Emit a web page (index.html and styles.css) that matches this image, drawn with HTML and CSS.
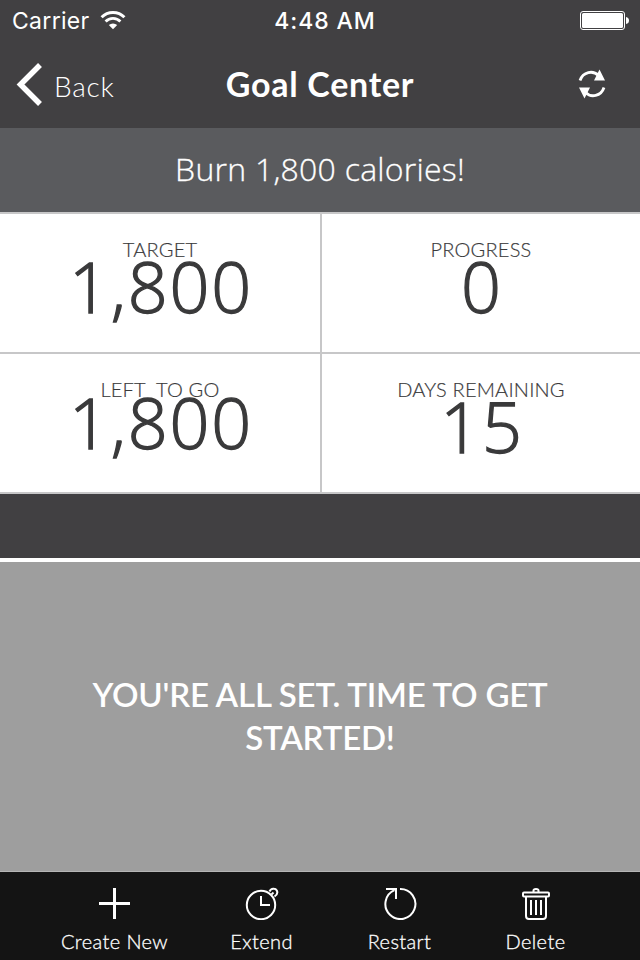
FILE: index.html
```
<!DOCTYPE html>
<html lang="en">

<head>
  <meta charset="utf-8">
  <title>Goal Center</title>
  <link rel="stylesheet" href="styles.css">
</head>

<body>
  <div class="app">
    <div class="status-bar">
      <div class="carrier">
        <span class="carrier-name">Carrier</span>
        <svg class="wifi" width="26" height="20" viewBox="0 0 26 20">
          <path d="M1.6 6.3A16 16 0 0 1 24.4 6.3" fill="none" stroke="#fff" stroke-width="3" />
          <path d="M5.6 10.500A10.3 10.3 0 0 1 20.4 10.500" fill="none" stroke="#fff" stroke-width="2.8" />
          <path d="M13 18.3L8.8 14.1A6 6 0 0 1 17.2 14.1Z" fill="#fff" />
        </svg>
      </div>
      <span class="time">4:48 AM</span>
      <svg class="battery" width="50" height="20" viewBox="0 0 50 20">
        <rect x=".5" y=".5" width="44" height="18" rx="2.5" fill="none" stroke="#fff" />
        <rect x="2" y="2" width="41" height="15" rx="1.5" fill="#fff" />
        <path d="M46 6Q49 6.500 49 9.500Q49 12.500 46 13Z" fill="#fff" />
      </svg>
    </div>

    <div class="nav-bar">
      <div class="back">
        <svg width="26" height="43" viewBox="0 0 26 43">
          <path d="M24 2L4.500 21.500L24 41" fill="none" stroke="#fff" stroke-width="5.500" />
        </svg>
        <span class="back-text">Back</span>
      </div>
      <h1 class="title">Goal Center</h1>
      <svg class="refresh" width="28" height="30" viewBox="0 0 28 30">
        <path d="M2 11.500C5 2.500 15 1 20.500 6.500" fill="none" stroke="#fff" stroke-width="2.800" />
        <path d="M21.500 .5L27 11.500H16Z" fill="#fff" />
        <path d="M26 18.500C23 27.500 13 29 7.500 23.500" fill="none" stroke="#fff" stroke-width="2.800" />
        <path d="M6.500 29.500L1 18.500H12Z" fill="#fff" />
      </svg>
    </div>

    <div class="goal"><span class="goal-text">Burn 1,800 calories!</span></div>

    <div class="stats">
      <div class="stat">
        <div class="label">TARGET</div>
        <div class="number">1,800</div>
      </div>
      <div class="stat">
        <div class="label">PROGRESS</div>
        <div class="number">0</div>
      </div>
      <div class="stat left-to-go">
        <div class="label">LEFT&nbsp; TO GO</div>
        <div class="number">1,800</div>
      </div>
      <div class="stat">
        <div class="label">DAYS REMAINING</div>
        <div class="number">15</div>
      </div>
    </div>

    <div class="spacer"></div>

    <div class="message">
      <p>YOU'RE ALL SET. TIME TO GET<br>STARTED!</p>
    </div>

    <div class="toolbar">
      <div class="tool">
        <svg width="34" height="34" viewBox="0 0 34 34">
          <path d="M16.500 2V33M1 17.500H32" fill="none" stroke="#fff" stroke-width="3" />
        </svg>
        <span>Create New</span>
      </div>
      <div class="tool">
        <svg width="34" height="34" viewBox="0 0 34 34">
          <g fill="none" stroke="#fff" stroke-width="2">
            <circle cx="16" cy="19" r="14.200" />
            <path d="M16 10V19H25" />
            <path d="M24.500 5.500C26 2 30.500 2 31.800 4.500C33 7 32 9 29.500 10.500" />
            <path d="M26.500 8.500L28.500 6.500" />
          </g>
        </svg>
        <span>Extend</span>
      </div>
      <div class="tool">
        <svg width="34" height="34" viewBox="0 0 34 34">
          <g fill="none" stroke="#fff" stroke-width="2">
            <path d="M17 3A15 15 0 1 1 11.500 4.200" />
            <path d="M3 3H13V13" />
          </g>
        </svg>
        <span>Restart</span>
      </div>
      <div class="tool">
        <svg width="34" height="34" viewBox="0 0 34 34">
          <g fill="none" stroke="#fff" stroke-width="2">
            <path d="M14.500 6V4.500Q14.500 3 17 3Q19.500 3 19.500 4.500V6" />
            <rect x="4" y="6.500" width="26" height="4" rx="1" />
            <path d="M7 11V30Q7 33 10 33H24Q27 33 27 30V11M12 14V29M17 14V29M22 14V29" />
          </g>
        </svg>
        <span>Delete</span>
      </div>
    </div>
  </div>
</body>

</html>
```
FILE: styles.css
```
body {
  margin: 0;
  background-color: #414042;
  font-family: Lato, "Open Sans", sans-serif;
  color: #fff;
}

.app {
  width: 640px;
  height: 960px;
  display: flex;
  flex-direction: column;
  overflow: hidden;
}

.app span {
  white-space: nowrap;
}

/* status bar */
.status-bar {
  height: 40px;
  display: grid;
  grid-template-columns: 1fr auto 1fr;
  align-items: center;
  padding: 1px 10px 0 12px;
  box-sizing: border-box;
  font-family: Inter, sans-serif;
  font-size: 23px;
}

.carrier {
  display: flex;
  align-items: center;
  gap: 10px;
}

.carrier-name {
  letter-spacing: 0.3px;
}

.time {
  padding-left: 8px;
  font-weight: 500;
  letter-spacing: 0.9px;
}

.battery {
  justify-self: end;
}

/* navigation */
.nav-bar {
  height: 88px;
  display: grid;
  grid-template-columns: 1fr auto 1fr;
  align-items: center;
  padding: 0 34px 0 16px;
}

.back {
  display: flex;
  align-items: center;
  gap: 12px;
  font-size: 28px;
  font-weight: 300;
}

.back-text {
  padding-top: 3px;
  letter-spacing: 0.8px;
}

.title {
  margin: 0;
  padding: 0 0 1px 18px;
  font-size: 34px;
  font-weight: 700;
  letter-spacing: 0.7px;
}

.refresh {
  justify-self: end;
}

.goal {
  height: 84px;
  line-height: 81px;
  background-color: #5a5b5e;
  text-align: center;
  font-family: "Open Sans", sans-serif;
  font-size: 32px;
  font-weight: 300;
  letter-spacing: 0.25px;
  -webkit-text-stroke: 0.3px #fff;
}

/* numbers */
.stats {
  display: grid;
  grid-template-columns: 320px 318px;
  grid-auto-rows: 138px;
  gap: 2px;
  padding: 2px 0;
  background-color: #c7c7c8;
}

.stat {
  background-color: #fff;
  text-align: center;
  color: #3a3a3b;
}

.label {
  height: 23px;
  padding-top: 23px;
  line-height: 24px;
  font-size: 20px;
  font-weight: 300;
  letter-spacing: 0.2px;
  -webkit-text-stroke: 0.2px #3a3a3b;
}

.number {
  padding-left: 2px;
  line-height: 52px;
  font-family: "Open Sans", sans-serif;
  font-size: 70px;
  font-weight: 300;
  letter-spacing: 1.8px;
  -webkit-text-stroke: 1.3px #3a3a3b;
}

.left-to-go .number {
  margin-top: -4px;
}

.spacer {
  height: 64px;
}

.message {
  height: 309px;
  display: flex;
  align-items: center;
  justify-content: center;
  border-top: 4px solid #fff;
  border-bottom: 1px solid #b5b5b5;
  background-color: #9e9e9e;
  text-align: center;
  font-size: 33px;
  font-weight: 600;
  line-height: 43px;
}

.message p {
  margin: 0;
  padding-bottom: 2px;
  letter-spacing: -0.2px;
}

/* bottom buttons */
.toolbar {
  height: 88px;
  display: grid;
  grid-template-columns: 157px 137px 139px 133px;
  padding-left: 36px;
  background-color: #141414;
}

.tool {
  display: flex;
  flex-direction: column;
  align-items: center;
  padding-top: 14px;
  font-size: 20px;
  font-weight: 300;
  line-height: 24px;
  letter-spacing: 0.4px;
  -webkit-text-stroke: 0.3px #fff;
}

.tool span {
  margin-top: 9px;
}
```
